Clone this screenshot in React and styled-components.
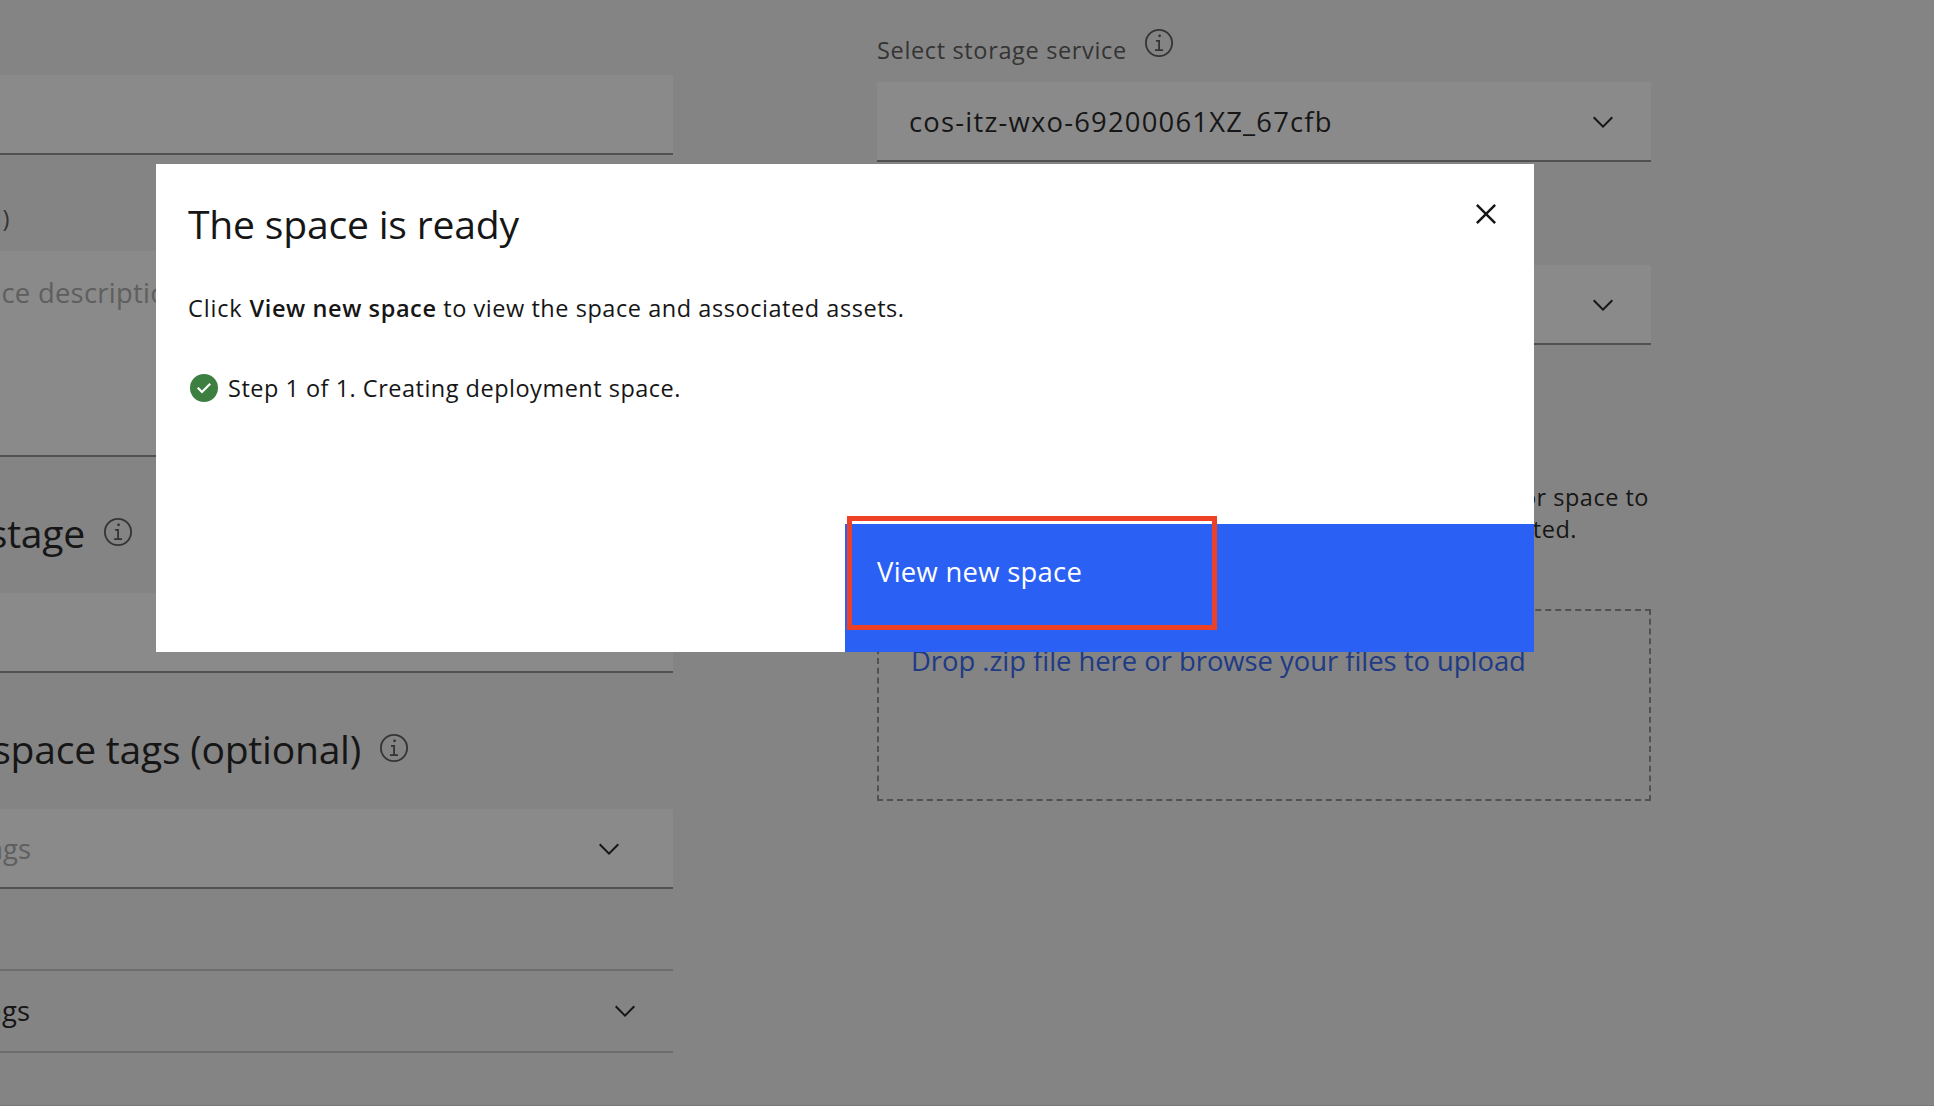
import React from 'react';
import styled, { createGlobalStyle } from 'styled-components';

const Global = createGlobalStyle`
  *, *::before, *::after { box-sizing: border-box; }
  body {
    margin: 0;
    overflow: hidden;
    background: #f2f2f2;
    color: #161616;
    font-family: "Open Sans", "Noto Sans", sans-serif;
    font-variant-ligatures: none;
  }
`;

const Page = styled.main`
  display: flex;
  gap: 204px;
  width: 1934px;
  height: 1106px;
  overflow: hidden;
  border-bottom: 1px solid #dcdcdc;
`;

const Details = styled.section`
  display: flex;
  flex-direction: column;
  flex: none;
  width: 673px;
  padding-top: 75px;
`;

const Resources = styled.section`
  display: flex;
  flex-direction: column;
  flex: none;
  width: 774px;
  padding-top: 27px;
`;

const Trailing = styled.span`
  display: flex;
  justify-content: flex-end;
  flex: none;
  width: ${(p) => p.$end}px;
  white-space: nowrap;
`;

const Field = styled.div`
  display: flex;
  align-items: center;
  justify-content: space-between;
  flex: none;
  height: 80px;
  margin-top: ${(p) => p.$gap || 0}px;
  padding: ${(p) => p.$drop ?? 2}px ${(p) => p.$right ?? 32}px 0 ${(p) => p.$left ?? 32}px;
  background: #ffffff;
  border-bottom: 2px solid #8d8d8d;
  font-size: 27.4px;
  line-height: 40px;
  letter-spacing: ${(p) => p.$track || 0}px;
  color: ${(p) => (p.$muted ? '#a8a8a8' : '#161616')};
`;

const TextArea = styled.div`
  flex: none;
  height: 206px;
  margin-top: 17px;
  padding-top: 22px;
  background: #ffffff;
  border-bottom: 2px solid #8d8d8d;
  font-size: 27.4px;
  line-height: 40px;
  letter-spacing: 0.27px;
  color: #a8a8a8;
`;

const Label = styled.div`
  margin-top: 47px;
  font-size: 23.5px;
  line-height: 32px;
  letter-spacing: 0.65px;
  color: #525252;
`;

const LabelRow = styled.div`
  display: flex;
  align-items: flex-start;
  gap: 17px;
  height: 39px;
  margin-bottom: 16px;
`;

const LabelText = styled.span`
  width: 249px;
  padding-top: 7px;
  font-size: 23.5px;
  line-height: 32px;
  letter-spacing: 0.65px;
  white-space: nowrap;
  color: #525252;
`;

const Heading = styled.h2`
  display: flex;
  align-items: flex-start;
  gap: 17px;
  height: 40px;
  margin: ${(p) => p.$gap}px 0 40px;
  font-size: 39.1px;
  line-height: 40px;
  font-weight: 400;
  letter-spacing: -0.25px;

  svg { margin-top: 3px; }
`;

const Accordion = styled.div`
  display: flex;
  align-items: center;
  justify-content: space-between;
  flex: none;
  height: 84px;
  margin-top: 80px;
  padding: 0 32px 0 0;
  border-top: 2px solid #c6c6c6;
  border-bottom: 2px solid #c6c6c6;
  font-size: 27.4px;
  line-height: 40px;
`;

const Description = styled.p`
  display: flex;
  flex-direction: column;
  align-items: flex-end;
  margin: 136px 2px 64px 0;
  font-size: 23.5px;
  line-height: 32px;
  letter-spacing: 0.5px;
`;

const LastLine = styled.span`
  margin-right: 72px;
`;

const DropZone = styled.div`
  height: 192px;
  padding: 30px 32px;
  border: 2px dashed #8d8d8d;
  font-size: 27.4px;
  line-height: 40px;
  letter-spacing: -0.02px;
  white-space: nowrap;
  color: #2b60f5;
`;

const Svg = styled.svg`
  display: block;
  flex: none;
  width: ${(p) => p.$size}px;
  height: ${(p) => p.$size}px;
  fill: ${(p) => p.$color};
`;

const Scrim = styled.div`
  position: fixed;
  inset: 0;
  padding: 164px 0 0 156px;
  background: rgba(22, 22, 22, 0.5);
`;

const Dialog = styled.div`
  display: flex;
  flex-direction: column;
  width: 1378px;
  height: 488px;
  background: #ffffff;
`;

const DialogHeader = styled.header`
  display: flex;
  align-items: flex-start;
  justify-content: space-between;
  height: 128px;
  padding: 30px 28px 0 32px;
`;

const DialogTitle = styled.h1`
  margin: 6px 0 0;
  font-size: 39.1px;
  line-height: 48px;
  font-weight: 400;
  letter-spacing: -0.2px;
`;

const CloseButton = styled.button`
  display: flex;
  padding: 0;
  border: 0;
  background: none;
`;

const DialogBody = styled.div`
  display: flex;
  flex-direction: column;
  gap: 48px;
  flex: 1;
  padding-left: 32px;
  font-size: 23.5px;
  line-height: 32px;
  letter-spacing: 0.55px;

  strong { font-weight: 600; letter-spacing: 0.6px; }
`;

const Lead = styled.span`
  letter-spacing: 0.85px;
`;

const Step = styled.div`
  display: flex;
  align-items: center;
  gap: 8px;
  letter-spacing: 0.5px;
`;

const DialogFooter = styled.footer`
  display: flex;
  justify-content: flex-end;
`;

const PrimaryButton = styled.button`
  position: relative;
  display: flex;
  align-items: flex-start;
  width: 689px;
  height: 128px;
  padding: 28px 32px;
  border: 0;
  background: #2b60f5;
  color: #ffffff;
  font: 400 27.4px/40px "Open Sans", "Noto Sans", sans-serif;
  letter-spacing: 0.3px;
  text-align: left;
`;

const Highlight = styled.span`
  position: absolute;
  left: 2px;
  top: -8px;
  width: 370px;
  height: 114px;
  border: 5px solid #ee4025;
`;

const Chevron = () => (
  <Svg $size={32} $color="#161616" viewBox="0 0 16 16">
    <path d="M8 11L3 6 3.7 5.3 8 9.6 12.3 5.3 13 6z" />
  </Svg>
);

const Info = () => (
  <Svg $size={32} $color="#525252" viewBox="0 0 32 32">
    <path d="M17 22.3V13h-4v1.7h2.2v7.6H12V24h8v-1.7zM16.6 7.4a1.4 1.4 0 1 0 1.4 1.4 1.4 1.4 0 0 0-1.4-1.4z" />
    <path d="M16 30A14 14 0 1 1 30 16 14 14 0 0 1 16 30zM16 3.8A12.2 12.2 0 1 0 28.2 16 12.2 12.2 0 0 0 16 3.8z" />
  </Svg>
);

const Close = () => (
  <Svg $size={40} $color="#161616" viewBox="0 0 32 32">
    <path d="M17.4141 16L24 9.4141 22.5859 8 16 14.5859 9.4143 8 8 9.4141 14.5859 16 8 22.5859 9.4143 24 16 17.4141 22.5859 24 24 22.5859z" />
  </Svg>
);

const Done = () => (
  <Svg $size={32} $color="#3d7f40" viewBox="0 0 32 32">
    <path d="M16 2A14 14 0 1 0 30 16 14 14 0 0 0 16 2zM14 21.5908l-5-5L10.5906 15 14 18.4092 21.41 11l1.5957 1.5859z" />
  </Svg>
);

export default function App() {
  return (
    <>
      <Global />
      <Page>
        <Details>
          <Field />
          <Label><Trailing $end={10}>(optional)</Trailing></Label>
          <TextArea><Trailing $end={184}>space description</Trailing></TextArea>
          <Heading $gap={56}>
            <Trailing $end={85}>stage</Trailing>
            <Info />
          </Heading>
          <Field />
          <Heading $gap={56}>
            <Trailing $end={361}>space tags (optional)</Trailing>
            <Info />
          </Heading>
          <Field $left={0} $right={48} $drop={1} $muted>
            <Trailing $end={31}>tags</Trailing>
            <Chevron />
          </Field>
          <Accordion>
            <Trailing $end={30}>tags</Trailing>
            <Chevron />
          </Accordion>
        </Details>
        <Resources>
          <LabelRow>
            <LabelText>Select storage service</LabelText>
            <Info />
          </LabelRow>
          <Field $track={1.21}>
            <span>cos-itz-wxo-69200061XZ_67cfb</span>
            <Chevron />
          </Field>
          <Field $gap={103}>
            <span />
            <Chevron />
          </Field>
          <Description>
            <span>or space to</span>
            <LastLine>created.</LastLine>
          </Description>
          <DropZone>Drop .zip file here or browse your files to upload</DropZone>
        </Resources>
      </Page>
      <Scrim>
        <Dialog role="dialog">
          <DialogHeader>
            <DialogTitle>The space is ready</DialogTitle>
            <CloseButton aria-label="Close"><Close /></CloseButton>
          </DialogHeader>
          <DialogBody>
            <div>
              <Lead>Click </Lead>
              <strong>View new space</strong> to view the space and associated assets.
            </div>
            <Step><Done />Step 1 of 1. Creating deployment space.</Step>
          </DialogBody>
          <DialogFooter>
            <PrimaryButton>
              View new space
              <Highlight />
            </PrimaryButton>
          </DialogFooter>
        </Dialog>
      </Scrim>
    </>
  );
}
